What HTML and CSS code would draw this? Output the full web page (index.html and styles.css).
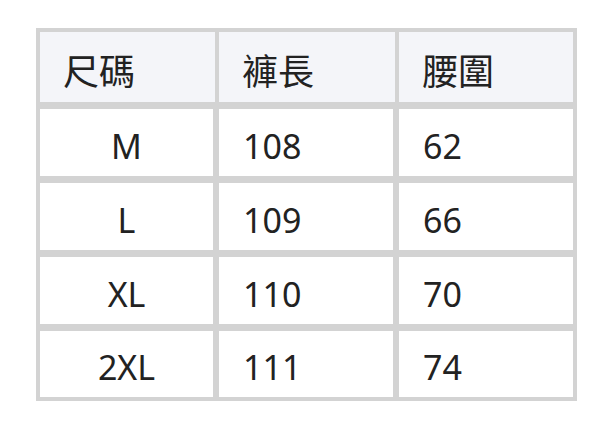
FILE: index.html
```html
<!DOCTYPE html>
<html lang="zh-Hant">
<head>
<meta charset="utf-8">
<title>尺碼表</title>
<link rel="stylesheet" href="styles.css">
</head>
<body>
<table class="size-table">
  <thead>
    <tr>
      <th class="c1">尺碼</th>
      <th class="c2">褲長</th>
      <th class="c3">腰圍</th>
    </tr>
  </thead>
  <tbody>
    <tr><td class="c1 center">M</td><td class="c2">108</td><td class="c3">62</td></tr>
    <tr><td class="c1 center">L</td><td class="c2">109</td><td class="c3">66</td></tr>
    <tr><td class="c1 center">XL</td><td class="c2">110</td><td class="c3">70</td></tr>
    <tr><td class="c1 center">2XL</td><td class="c2">111</td><td class="c3">74</td></tr>
  </tbody>
</table>
</body>
</html>
```
FILE: styles.css
```css
html, body {
  margin: 0;
  padding: 0;
  background: #ffffff;
}
body {
  padding: 28px 0 0 36px;
  font-family: "Noto Sans", "Noto Sans CJK TC", sans-serif;
  color: #222222;
}
.size-table {
  border-collapse: separate;
  border-spacing: 0;
  border: 4px solid #d3d3d3;
  table-layout: fixed;
  width: 541px;
}
.size-table th,
.size-table td {
  box-sizing: border-box;
  padding: 6px 0 0 24px;
  text-align: left;
  font-weight: 400;
  font-size: 34px;
  line-height: 40px;
  border: 0 solid #d3d3d3;
}
.size-table th {
  height: 77px;
  padding-top: 9px;
  padding-left: 23px;
  font-size: 36px;
  background: #f4f5f9;
  border-right-width: 4px;
  border-bottom-width: 7px;
}
.size-table td {
  height: 74px;
  border-right-width: 6px;
  border-bottom-width: 7px;
}
.size-table tr > :last-child {
  border-right-width: 0;
}
.size-table tbody tr:last-child td {
  border-bottom-width: 0;
  height: 66px;
}
.size-table .c1 { width: 179px; }
.size-table .c2 { width: 180px; }
.size-table .c3 { width: 174px; }
.size-table td.center {
  text-align: center;
  padding-left: 0;
}
```
